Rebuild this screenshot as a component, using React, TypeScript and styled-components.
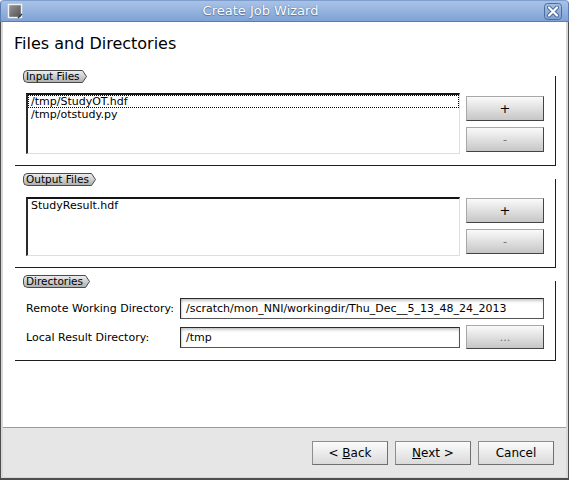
import React from "react";
import styled, { createGlobalStyle } from "styled-components";

const Global = createGlobalStyle`
  html, body { margin: 0; padding: 0; background: #ffffff; }
  body { font-family: "DejaVu Sans", "Liberation Sans", sans-serif; }
  * { box-sizing: border-box; }
`;

const Window = styled.div`
  width: 569px;
  height: 480px;
  display: flex;
  flex-direction: column;
  overflow: hidden;
`;

const TitleBar = styled.div`
  height: 22px;
  flex: none;
  display: flex;
  align-items: center;
  padding: 0 6px 0 6px;
  background: linear-gradient(#a9c3e7, #7fa2d5);
  border: 1px solid #5d7db0;
  border-top-color: #7f9dcc;
  border-radius: 4px 4px 0 0;
`;

const TitleText = styled.div`
  flex: 1;
  text-align: center;
  color: #ffffff;
  font-size: 13px;
  line-height: 20px;
  padding-right: 46px;
  text-shadow: 0 0 1px #4b6a9c, 0 1px 1px #5677aa;
`;

const Frame = styled.div`
  flex: 1;
  display: flex;
  flex-direction: column;
  background: #d8d8d8;
  border: 1px solid #4e4e4e;
  border-top: none;
  border-bottom-width: 2px;
  padding: 0 2px 1px 2px;
`;

const Body = styled.div`
  height: 405px;
  flex: none;
  background: #ffffff;
  display: flex;
  flex-direction: column;
  padding: 13px 10px 0 12px;
`;

const PageTitle = styled.div`
  font-size: 16px;
  line-height: 18px;
  color: #000;
  margin-left: -1px;
`;

const Group = styled.div<{ $top: number }>`
  margin-top: ${(p) => p.$top}px;
  border-right: 1px solid #1e1e1e;
  border-bottom: 1px solid #1e1e1e;
  padding: 0 11px 11px 11px;
  display: flex;
  flex-direction: column;
`;

const Legend = styled.div`
  margin: -6px 0 0 -3px;
  height: 13px;
  display: flex;
  align-self: flex-start;
`;

const LegendText = styled.span`
  height: 13px;
  line-height: 11px;
  padding: 0 1px 0 2px;
  font-size: 10.5px;
  color: #000;
  background: linear-gradient(#ececec, #b0b0b0);
  border: 1px solid #4a4a4a;
  border-right: none;
  border-radius: 5px 0 0 5px;
`;

const LegendTip = () => (
  <svg width="6" height="13" viewBox="0 0 6 13" style={{ display: "block" }}>
    <defs>
      <linearGradient id="lg" x1="0" y1="0" x2="0" y2="1">
        <stop offset="0" stopColor="#ececec" />
        <stop offset="1" stopColor="#b0b0b0" />
      </linearGradient>
    </defs>
    <path d="M0 0.5 H1.5 L5.5 6.5 L1.5 12.5 H0 Z" fill="url(#lg)" />
    <path d="M0 0.5 H1.5 L5.5 6.5 L1.5 12.5 H0" fill="none" stroke="#4a4a4a" strokeWidth="1" />
  </svg>
);

const ListRow = styled.div<{ $gap: number }>`
  margin-top: ${(p) => p.$gap}px;
  display: flex;
  gap: 6px;
`;

const List = styled.div<{ $h: number }>`
  flex: 1;
  height: ${(p) => p.$h}px;
  background: #fff;
  border-top: 2px solid #141414;
  border-left: 2px solid #2a2a2a;
  border-right: 1px solid #dedede;
  border-bottom: 1px solid #dedede;
  display: flex;
  flex-direction: column;
`;

const ListItem = styled.div<{ $focus?: boolean }>`
  height: 13px;
  line-height: 13px;
  font-size: 11px;
  color: #000;
  padding-left: 3px;
  outline: ${(p) => (p.$focus ? "1px dotted #000" : "none")};
  outline-offset: -1px;
  white-space: nowrap;
`;

const SideButtons = styled.div<{ $offset: number }>`
  width: 78px;
  flex: none;
  margin-top: ${(p) => p.$offset}px;
  display: flex;
  flex-direction: column;
  gap: 6px;
`;

const ToolButton = styled.div<{ $h?: number; $dim?: boolean }>`
  height: ${(p) => p.$h ?? 25}px;
  display: flex;
  align-items: center;
  justify-content: center;
  font-size: ${(p) => (p.$dim ? 11 : 13)}px;
  color: ${(p) => (p.$dim ? "#6e6e6e" : "#000")};
  background: linear-gradient(#fafafa, #c6c6c6);
  border: 1px solid;
  border-color: #a8a8a8 #444 #444 #a8a8a8;
`;

const DirGrid = styled.div`
  margin-top: 10px;
  display: grid;
  grid-template-columns: 148px 1fr 78px;
  column-gap: 6px;
  row-gap: 6px;
  align-items: center;
`;

const FieldLabel = styled.div`
  font-size: 11px;
  color: #000;
  white-space: nowrap;
`;

const TextField = styled.div<{ $span?: boolean }>`
  grid-column: ${(p) => (p.$span ? "2 / 4" : "auto")};
  height: 21px;
  display: flex;
  align-items: center;
  padding-left: 5px;
  font-size: 11px;
  color: #000;
  white-space: nowrap;
  overflow: hidden;
  background: #fff;
  border: 1px solid #555;
  border-top-color: #2a2a2a;
  border-left-color: #2a2a2a;
  box-shadow: inset 0 3px 3px -1px rgba(0, 0, 0, 0.22), inset 2px 0 2px -1px rgba(0, 0, 0, 0.15);
`;

const Footer = styled.div`
  flex: 1;
  background: #e6e6e6;
  border-top: 1px solid #9c9c9c;
  display: flex;
  justify-content: flex-end;
  align-items: flex-start;
  gap: 7px;
  padding: 13px 12px 0 0;
`;

const DialogButton = styled.div`
  width: 76px;
  height: 24px;
  display: flex;
  align-items: center;
  justify-content: center;
  font-size: 12px;
  color: #000;
  background: linear-gradient(#fbfbfb, #dadada);
  border: 1px solid #8e8e8e;
  border-right-color: #6f6f6f;
  border-bottom-color: #6f6f6f;
`;

const WindowIcon = () => (
  <svg width="16" height="16" viewBox="0 0 16 16" style={{ display: "block", flex: "none" }}>
    <defs>
      <linearGradient id="wi" x1="0" y1="0" x2="1" y2="1">
        <stop offset="0" stopColor="#9a9a9a" />
        <stop offset="1" stopColor="#4e4e4e" />
      </linearGradient>
    </defs>
    <rect x="1.5" y="1.5" width="13" height="13" fill="url(#wi)" stroke="#f2f2f2" strokeWidth="1.4" />
    <path d="M11 15 L15 11" stroke="#3a3a3a" strokeWidth="1.5" />
  </svg>
);

const CloseIcon = () => (
  <svg width="18" height="17" viewBox="0 0 18 17" style={{ display: "block", flex: "none" }}>
    <defs>
      <linearGradient id="ci" x1="0" y1="0" x2="0" y2="1">
        <stop offset="0" stopColor="#a6c0e6" />
        <stop offset="1" stopColor="#7d9fd2" />
      </linearGradient>
    </defs>
    <rect x="0.5" y="0.5" width="17" height="16" rx="3" fill="url(#ci)" stroke="#4d6c9c" />
    <path d="M5 4.5 L13 12.5 M13 4.5 L5 12.5" stroke="#49689a" strokeWidth="4" strokeLinecap="round" />
    <path d="M5 4.5 L13 12.5 M13 4.5 L5 12.5" stroke="#ffffff" strokeWidth="2.2" strokeLinecap="round" />
  </svg>
);

export default function App() {
  return (
    <Window>
      <Global />
      <TitleBar>
        <WindowIcon />
        <TitleText>Create Job Wizard</TitleText>
        <CloseIcon />
      </TitleBar>
      <Frame>
        <Body>
          <PageTitle>Files and Directories</PageTitle>

          <Group $top={23}>
            <Legend>
              <LegendText>Input Files</LegendText>
              <LegendTip />
            </Legend>
            <ListRow $gap={10}>
              <List $h={61}>
                <ListItem $focus>/tmp/StudyOT.hdf</ListItem>
                <ListItem>/tmp/otstudy.py</ListItem>
              </List>
              <SideButtons $offset={3}>
                <ToolButton>+</ToolButton>
                <ToolButton $dim>-</ToolButton>
              </SideButtons>
            </ListRow>
          </Group>

          <Group $top={13}>
            <Legend>
              <LegendText>Output Files</LegendText>
              <LegendTip />
            </Legend>
            <ListRow $gap={11}>
              <List $h={59}>
                <ListItem>StudyResult.hdf</ListItem>
              </List>
              <SideButtons $offset={1}>
                <ToolButton>+</ToolButton>
                <ToolButton $dim>-</ToolButton>
              </SideButtons>
            </ListRow>
          </Group>

          <Group $top={13}>
            <Legend>
              <LegendText>Directories</LegendText>
              <LegendTip />
            </Legend>
            <DirGrid>
              <FieldLabel>Remote Working Directory:</FieldLabel>
              <TextField $span>/scratch/mon_NNI/workingdir/Thu_Dec__5_13_48_24_2013</TextField>
              <FieldLabel>Local Result Directory:</FieldLabel>
              <TextField>/tmp</TextField>
              <ToolButton $h={24} $dim>...</ToolButton>
            </DirGrid>
          </Group>
        </Body>
        <Footer>
          <DialogButton>
            &lt;&nbsp;<u>B</u>ack
          </DialogButton>
          <DialogButton>
            <u>N</u>ext&nbsp;&gt;
          </DialogButton>
          <DialogButton>Cancel</DialogButton>
        </Footer>
      </Frame>
    </Window>
  );
}
